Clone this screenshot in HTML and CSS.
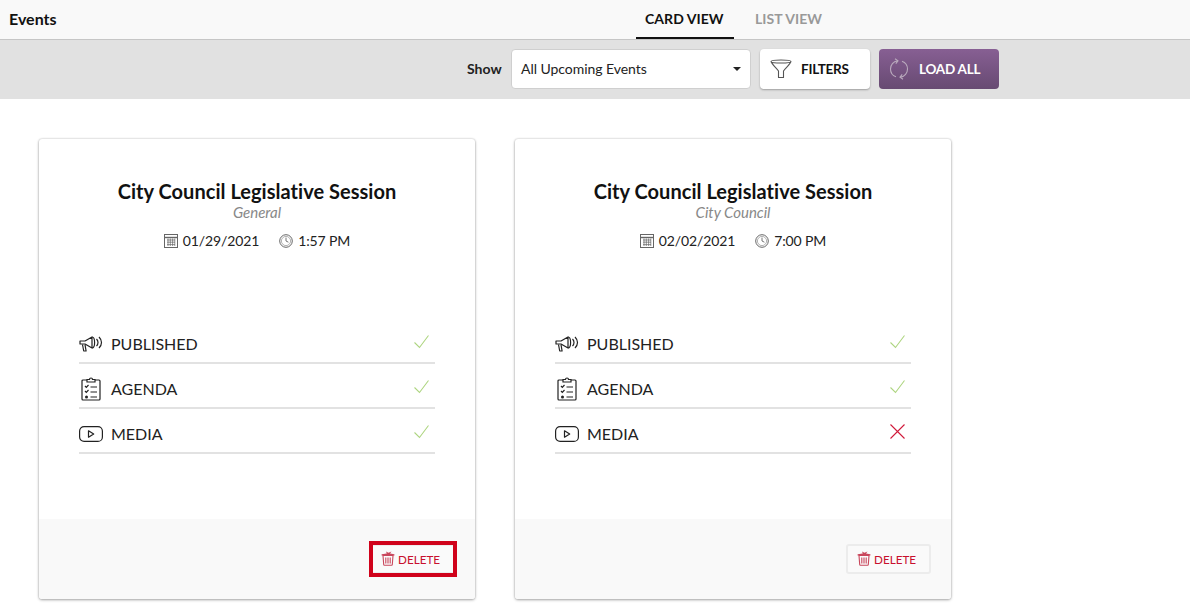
FILE: index.html
```html
<!DOCTYPE html>
<html lang="en">
<head>
<meta charset="utf-8">
<title>Events</title>
<link rel="stylesheet" href="styles.css">
</head>
<body>
<svg class="defs" width="0" height="0">
  <defs>
    <symbol id="i-cal" viewBox="0 0 14 14"><g fill="none" stroke="#666" stroke-width="1"><rect x=".5" y=".5" width="13" height="13"/><path d="M.5 3.500h13" stroke-width="1.400"/><path d="M3 6h8M3 8.200h8M3 10.600h8M4 4.500v7.500M6.300 4.500v7.500M8.600 4.500v7.500M10.800 4.500v7.500" stroke-width=".7"/></g></symbol>
    <symbol id="i-clock" viewBox="0 0 14 14"><g fill="none" stroke="#666"><circle cx="7" cy="7" r="6.300"/><circle cx="7" cy="7" r="4.600" stroke-width=".5"/><path d="M7 3.600V7l2.400 1.200" stroke-width=".9"/></g></symbol>
    <symbol id="i-mega" viewBox="0 0 24 17"><g fill="none" stroke="#222" stroke-width="1.200" stroke-linejoin="round"><path d="M1 5.500h5l7-4v11l-7-4H1z"/><path d="M3.500 9l1.200 6.500h2.400L6 9.200"/><path d="M13 1.500c1.800 0 2.600 2.600 2.600 5.500S14.800 12.500 13 12.500"/><path d="M17.500 3.500c1 1 1.500 2.200 1.500 3.500s-.5 2.500-1.500 3.500M20 1.500c1.500 1.500 2.500 3.400 2.500 5.500s-1 4-2.500 5.500"/></g></symbol>
    <symbol id="i-list" viewBox="0 0 20 24"><g fill="none" stroke="#222" stroke-width="1.200"><path d="M6 3H2a1 1 0 0 0-1 1v18a1 1 0 0 0 1 1h16a1 1 0 0 0 1-1V4a1 1 0 0 0-1-1h-4"/><path d="M6 5V2.500h2.500a1.500 1.500 0 0 1 3 0H14V5z"/><path d="M4 9l1.300 1.300L7.500 8M4 14l1.300 1.300L7.500 13M9.500 10h6.500M9.500 15h6.500M9.500 20h6.500"/></g><circle cx="5.500" cy="20" r="1.500" fill="#222"/></symbol>
    <symbol id="i-play" viewBox="0 0 24 16"><g fill="none" stroke="#222" stroke-width="1.200" stroke-linejoin="round"><rect x=".6" y=".6" width="22.800" height="14.800" rx="4.500"/><path d="M9.500 4.800v6.400l5.200-3.200z"/></g></symbol>
    <symbol id="i-check" viewBox="0 0 15 13"><path d="M.5 7.500l5 5L14.500.5" fill="none" stroke="#aed581" stroke-width="1.100"/></symbol>
    <symbol id="i-x" viewBox="0 0 15 15"><path d="M.5.500l14 14M14.500.500l-14 14" fill="none" stroke="#d0193a" stroke-width="1.100"/></symbol>
    <symbol id="i-trash" viewBox="0 0 14 15"><g fill="none" stroke="#c9475c" stroke-width="1.100"><path d="M2 4.500l.7 9a.8.800 0 0 0 .8.800h7a.8.800 0 0 0 .8-.8l.7-9z"/><path d="M4.800 6.500v6M7 6.500v6M9.200 6.500v6"/></g><path d="M.6 4.400h12.800V3.200L9 2.600l1.500-2-3 1.200L5 .6l.8 2L.6 3.200z" fill="#c9475c"/></symbol>
  </defs>
</svg>

<header class="topbar">
  <h1 class="page-title">Events</h1>
  <nav class="tabs">
    <a class="tab tab-active">CARD VIEW</a>
    <a class="tab">LIST VIEW</a>
  </nav>
</header>

<div class="toolbar">
  <span class="show-label">Show</span>
  <div class="select"><span>All Upcoming Events</span><i class="caret"></i></div>
  <button class="btn btn-filter">
    <svg class="btn-icon" viewBox="0 0 22 20"><path d="M1 2.500C1 1.500 5.500 1 11 1s10 .5 10 1.500S16.500 4 11 4 1 3.500 1 2.500zM1 2.500c1 3 6.500 7.500 7.500 9.500v6.500h5V12c1-2 6.500-6.500 7.500-9.500" fill="none" stroke="#555" stroke-width="1.100" stroke-linejoin="round"/></svg>
    FILTERS
  </button>
  <button class="btn btn-load">
    <svg class="btn-icon" viewBox="0 0 20 22"><path d="M8.500 2.800C4.300 3.500 1.500 7 1.500 11c0 3.600 2.200 6.600 5.500 7.800M6 .7l3 2.200-2.200 2.700M11.500 19.200c4.200-.7 7-4.200 7-8.200 0-3.600-2.200-6.600-5.500-7.800M14 21.300l-3-2.200 2.200-2.700" fill="none" stroke="#b9aabd" stroke-width="1.100"/></svg>
    LOAD ALL
  </button>
</div>

<main class="cards">
  <article class="card">
    <div class="card-body">
      <h2 class="card-title">City Council Legislative Session</h2>
      <p class="card-type">General</p>
      <div class="card-meta">
        <span class="meta-item"><svg class="meta-icon"><use href="#i-cal"/></svg>01/29/2021</span>
        <span class="meta-item"><svg class="meta-icon"><use href="#i-clock"/></svg>1:57 PM</span>
      </div>
      <ul class="status-list">
        <li class="status-row"><svg class="status-icon"><use href="#i-mega"/></svg><span class="status-name">PUBLISHED</span><svg class="status-mark"><use href="#i-check"/></svg></li>
        <li class="status-row"><svg class="status-icon"><use href="#i-list"/></svg><span class="status-name">AGENDA</span><svg class="status-mark"><use href="#i-check"/></svg></li>
        <li class="status-row"><svg class="status-icon"><use href="#i-play"/></svg><span class="status-name">MEDIA</span><svg class="status-mark"><use href="#i-check"/></svg></li>
      </ul>
    </div>
    <footer class="card-foot">
      <button class="delete delete-marked"><svg class="trash"><use href="#i-trash"/></svg>DELETE</button>
    </footer>
  </article>

  <article class="card">
    <div class="card-body">
      <h2 class="card-title">City Council Legislative Session</h2>
      <p class="card-type">City Council</p>
      <div class="card-meta">
        <span class="meta-item"><svg class="meta-icon"><use href="#i-cal"/></svg>02/02/2021</span>
        <span class="meta-item"><svg class="meta-icon"><use href="#i-clock"/></svg>7:00 PM</span>
      </div>
      <ul class="status-list">
        <li class="status-row"><svg class="status-icon"><use href="#i-mega"/></svg><span class="status-name">PUBLISHED</span><svg class="status-mark"><use href="#i-check"/></svg></li>
        <li class="status-row"><svg class="status-icon"><use href="#i-list"/></svg><span class="status-name">AGENDA</span><svg class="status-mark"><use href="#i-check"/></svg></li>
        <li class="status-row"><svg class="status-icon"><use href="#i-play"/></svg><span class="status-name">MEDIA</span><svg class="status-mark"><use href="#i-x"/></svg></li>
      </ul>
    </div>
    <footer class="card-foot">
      <button class="delete"><svg class="trash"><use href="#i-trash"/></svg>DELETE</button>
    </footer>
  </article>
</main>
</body>
</html>
```

FILE: styles.css
```css
* { box-sizing: border-box; }
html, body { margin: 0; padding: 0; }
body {
  width: 1190px;
  height: 615px;
  overflow: hidden;
  background: #fff;
  color: #111;
  font-family: Lato, "Liberation Sans", sans-serif;
  font-size: 14px;
}
.defs { display: block; height: 0; }

.topbar {
  display: flex;
  align-items: stretch;
  height: 40px;
  background: #f9f9f9;
  border-bottom: 1px solid #c6c6c6;
  box-shadow: 0 1px 1px rgba(0,0,0,.08);
  padding-left: 9px;
}
.page-title {
  flex: 0 0 627px;
  margin: 0;
  font-size: 16px;
  font-weight: 700;
  line-height: 38px;
}
.tabs { display: flex; }
.tab {
  width: 98px;
  margin-right: 12px;
  padding-left: 9px;
  font-size: 14px;
  font-weight: 700;
  line-height: 38px;
  letter-spacing: .05px;
  color: #999;
}
.tab-active {
  color: #111;
  height: 39px;
  border-bottom: 2px solid #111;
}

.toolbar {
  display: flex;
  align-items: flex-start;
  height: 59px;
  padding: 9px 0 0 467px;
  background: #e1e1e1;
}
.show-label { width: 44px; font-size: 14px; font-weight: 700; line-height: 40px; color: #222; }
.select {
  display: flex;
  align-items: center;
  justify-content: space-between;
  width: 240px;
  height: 40px;
  padding: 0 9px 2px 9px;
  background: #fff;
  border: 1px solid #cfcfcf;
  border-radius: 4px;
  font-size: 14px;
  letter-spacing: -.05px;
  color: #222;
}
.caret {
  width: 0;
  height: 0;
  margin-top: 2px;
  border-left: 4px solid transparent;
  border-right: 4px solid transparent;
  border-top: 4px solid #222;
}
.btn {
  display: flex;
  align-items: center;
  height: 40px;
  border: 0;
  border-radius: 4px;
  font-family: inherit;
  font-size: 13.500px;
  font-weight: 700;
  letter-spacing: -.25px;
}
.btn-icon { flex: none; display: block; }
.btn-filter {
  width: 110px;
  margin-left: 9px;
  padding: 0 0 0 10px;
  background: #fff;
  color: #111;
  box-shadow: 0 1px 2px rgba(0,0,0,.3);
}
.btn-filter .btn-icon { width: 22px; height: 20px; margin-right: 9px; }
.btn-load {
  width: 120px;
  margin-left: 9px;
  padding: 0 0 0 10px;
  background: linear-gradient(#875f93, #674a72);
  color: #fff;
}
.btn-load .btn-icon { width: 20px; height: 22px; margin-right: 10px; }

.cards {
  display: flex;
  gap: 40px;
  padding: 40px 0 0 39px;
}
.card {
  display: flex;
  flex-direction: column;
  width: 436px;
  height: 460px;
  background: #fff;
  border-radius: 3px;
  box-shadow: 0 1px 3px rgba(0,0,0,.32), 0 0 2px rgba(0,0,0,.22);
}
.card-body { flex: 1; padding: 39px 40px 0; text-align: center; }
.card-title {
  margin: 0;
  font-size: 20px;
  font-weight: 700;
  line-height: 26px;
  letter-spacing: .03px;
  color: #111;
}
.card-type {
  margin: 0;
  font-size: 15px;
  font-style: italic;
  line-height: 17px;
  color: #888;
}
.card-meta {
  display: flex;
  justify-content: center;
  gap: 20px;
  margin-top: 11px;
  line-height: 18px;
  letter-spacing: -.12px;
  color: #222;
}
.meta-item { display: flex; align-items: center; }
.meta-icon { width: 14px; height: 14px; margin-right: 5px; }

.status-list { margin: 69px 0 0; padding: 0; list-style: none; }
.status-row {
  display: flex;
  align-items: center;
  height: 45px;
  padding-top: 6px;
  border-bottom: 2px solid #e2e2e2;
  font-size: 16px;
  text-align: left;
  color: #222;
}
.status-icon { flex: none; width: 24px; height: 24px; margin-right: 8px; }
.status-name { flex: 1; }
.status-mark { flex: none; width: 15px; height: 15px; margin: -5px 6.500px 0 0; }

.card-foot {
  display: flex;
  justify-content: flex-end;
  align-items: center;
  height: 80px;
  padding-right: 20px;
  background: #f9f9f9;
  border-radius: 0 0 3px 3px;
}
.delete {
  position: relative;
  display: flex;
  align-items: center;
  width: 85px;
  height: 30px;
  padding: 0 0 1px 9px;
  background: #fafafa;
  border: 2px solid #ececec;
  border-radius: 3px;
  font-family: inherit;
  font-size: 11.700px;
  color: #c8102e;
}
.trash { width: 14px; height: 15px; margin-right: 3px; }
.delete-marked::after {
  content: "";
  box-sizing: border-box;
  position: absolute;
  left: -3px;
  top: -5px;
  width: 88px;
  height: 36px;
  border: 4px solid #d0021b;
}
```
